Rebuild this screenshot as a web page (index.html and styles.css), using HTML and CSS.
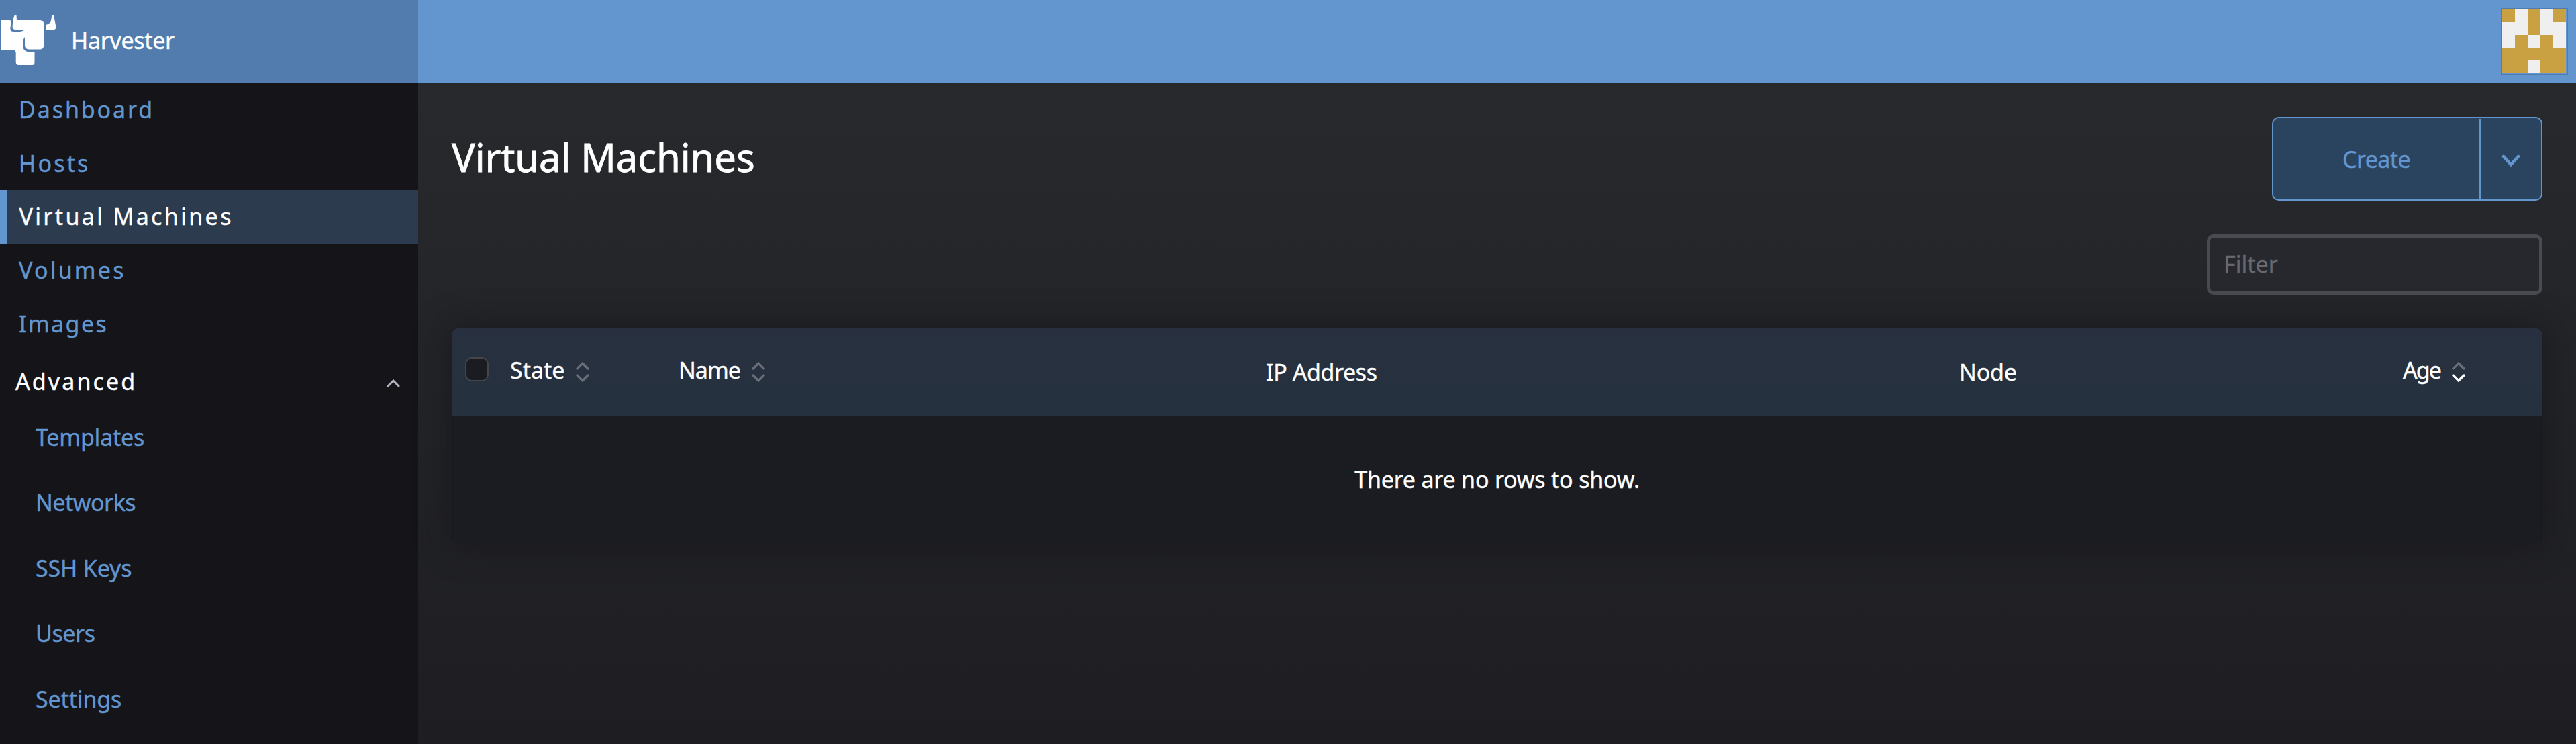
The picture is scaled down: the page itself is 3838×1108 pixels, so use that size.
FILE: index.html
```
<!DOCTYPE html>
<html lang="en">
<head>
<meta charset="utf-8">
<title>Harvester</title>
<link rel="stylesheet" href="styles.css">
</head>
<body>
<div class="app">
  <header class="topbar">
    <div class="brand">
      <svg class="logo" width="86" height="124" viewBox="0 0 86 124" fill="#fff">
        <path d="M1 30H14Q17 30 16.5 33L15.3 42Q15.3 47 20 47H30Q34 47 37 44H22Q18 43 18.7 38Q19.5 28 21.5 23Q23 20.5 24.5 23L25 30H60Q65.5 31 65.5 36V67Q65 73 60 73.5H43Q37 73 37 67V55Q34.5 58 34.3 62V68Q34.5 76 41 77H51.5V93Q51.5 97 48 97H27.5Q24 97 23.7 93V79Q23.7 75 20 74.3H1Z"/>
        <path d="M68 37Q76 36 76.5 28Q77 22 79 22Q80.5 22 81 28L83.5 40Q83.5 44 79 44.5H68Z"/>
      </svg>
      <span class="brand-name">Harvester</span>
    </div>
    <svg class="avatar" width="100" height="100" viewBox="0 0 100 100" shape-rendering="crispEdges">
      <rect x="1" y="1" width="98" height="98" fill="none" stroke="#527cae" stroke-width="2"/>
      <rect x="2" y="2" width="95" height="95" fill="#efefef"/>
      <path fill="#c9a143" d="M2 2h19v19H2zM40 2h19v38H40zM78 2h19v19H78zM21 40h19v19H21zM59 40h19v19H59zM2 59h95v38H59V78H40v19H2z"/>
    </svg>
  </header>
  <nav class="sidebar">
    <a class="item dashboard">Dashboard</a>
    <a class="item hosts">Hosts</a>
    <a class="item active">Virtual Machines</a>
    <a class="item volumes">Volumes</a>
    <a class="item images">Images</a>
    <div class="group">
      <span>Advanced</span>
      <svg width="20" height="12" viewBox="0 0 20 12" fill="none" stroke="#b6b6c2" stroke-width="3" stroke-linecap="round"><path d="M2 10L10 2l8 8"/></svg>
    </div>
    <a class="child templates">Templates</a>
    <a class="child networks">Networks</a>
    <a class="child">SSH Keys</a>
    <a class="child users">Users</a>
    <a class="child">Settings</a>
  </nav>
  <main class="main">
    <div class="title-row">
      <h1 class="title">Virtual Machines</h1>
      <div class="create">
        <button class="create-main">Create</button>
        <button class="create-toggle"><svg width="28" height="18" viewBox="0 0 28 18" fill="none" stroke="#6396cf" stroke-width="4.6" stroke-linecap="round"><path d="M3 3l11 12L25 3"/></svg></button>
      </div>
    </div>
    <input class="filter" placeholder="Filter">
    <section class="table">
      <div class="thead">
        <span class="check"></span>
        <span class="th">State <svg class="sort" width="20" height="30" viewBox="0 0 20 30"><path d="M2 10l8-8 8 8"/><path d="M2 20l8 8 8-8"/></svg></span>
        <span class="th name">Name <svg class="sort" width="20" height="30" viewBox="0 0 20 30"><path d="M2 10l8-8 8 8"/><path d="M2 20l8 8 8-8"/></svg></span>
        <span class="th plain ip">IP Address</span>
        <span class="th plain">Node</span>
        <span class="th age">Age <svg class="sort" width="20" height="30" viewBox="0 0 20 30"><path d="M2 10l8-8 8 8"/><path class="on" d="M2 20l8 8 8-8"/></svg></span>
      </div>
      <div class="empty">There are no rows to show.</div>
    </section>
  </main>
</div>
</body>
</html>
```
FILE: styles.css
```
* { box-sizing: border-box; }
body {
  margin: 0;
  font: 34px/80px "Noto Sans", sans-serif;
  -webkit-text-stroke: 0.4px currentColor;
  color: #fff;
  background: #1b1c21;
}
.app {
  display: grid;
  grid-template: 124px 984px / 623px 1fr;
  height: 1108px;
  overflow: hidden;
}
.topbar {
  grid-column: 1 / 3;
  display: flex;
  justify-content: space-between;
  align-items: center;
  padding-right: 12px;
  background: #6396cf;
}
.brand {
  display: flex;
  align-items: center;
  gap: 20px;
  width: 623px;
  height: 124px;
  background: #527cad;
}
.brand-name { line-height: 120px; height: 124px; letter-spacing: -0.3px; }
.avatar { display: block; }

.sidebar { background: #141419; color: #6396cf; }
.item {
  display: block;
  height: 79.5px;
  line-height: 78px;
  padding-left: 28px;
  letter-spacing: 3.2px;
}
.item.dashboard { letter-spacing: 2.9px; }
.item.active {
  height: 80px;
  line-height: 79px;
  padding-left: 18.5px;
  border-left: 10px solid #6396cf;
  background: #2c3b4d;
  color: #fff;
  letter-spacing: 3.35px;
}
.item.images { letter-spacing: 2.4px; }
.group {
  display: flex;
  justify-content: space-between;
  align-items: center;
  height: 80px;
  margin-top: 5px;
  padding: 2px 27px 0 23px;
  color: #fff;
  letter-spacing: 3.1px;
}
.group svg { margin-top: 5px; }
.child {
  display: block;
  height: 97.4px;
  line-height: 100px;
  padding-left: 53px;
  letter-spacing: -0.15px;
}
.child.templates { margin-top: -6px; letter-spacing: -0.2px; }
.child.networks { letter-spacing: -0.5px; }
.child.users { letter-spacing: -0.4px; }

.main {
  display: flex;
  flex-direction: column;
  padding: 50px 50px 0;
  background: linear-gradient(#27292d, #1e1e22);
}
.title-row { display: flex; justify-content: space-between; height: 125px; }
.title {
  margin: 0;
  font-size: 58px;
  font-weight: 400;
  line-height: 120px;
  letter-spacing: -0.1px;
  -webkit-text-stroke-width: 0.8px;
}
.create {
  display: flex;
  width: 403px;
  border: 2px solid #6396cf;
  border-radius: 10px;
  background: #2a435e;
}
.create button {
  display: flex;
  align-items: center;
  justify-content: center;
  padding: 0;
  border: 0;
  background: none;
  font: inherit;
  color: #6396cf;
}
.create-main { width: 307px; letter-spacing: -0.6px; }
.create .create-toggle {
  flex: 1;
  margin-top: 1px;
  border-left: 2px solid #6396cf;
}
.create-toggle svg { margin-top: 3px; }
.filter {
  align-self: flex-end;
  width: 500px;
  height: 90px;
  margin-top: 50px;
  padding: 0 0 2px 20px;
  border: 5px solid #4a4b50;
  border-radius: 10px;
  background: #27282d;
  font: inherit;
  color: #fff;
}
.filter::placeholder { color: #68696f; opacity: 1; }

.table {
  height: 320px;
  margin-top: 50px;
  border-radius: 10px;
  overflow: hidden;
  box-shadow: 0 0 50px rgba(20, 20, 25, .75);
}
.thead {
  display: grid;
  grid-template-columns: 87px 251px 875px 1033px 661px 1fr;
  height: 131px;
  background: linear-gradient(#28303f, #25313e);
}
.check {
  width: 35px;
  height: 36px;
  margin: 43px 0 0 20px;
  border: 2px solid #45464c;
  border-radius: 10px;
  background: #1b1c21;
}
.th { display: flex; line-height: 124px; height: 131px; }
.th.plain { line-height: 130px; letter-spacing: -0.2px; }
.th.ip { letter-spacing: -0.4px; }
.th.name { letter-spacing: -1px; }
.th.age { letter-spacing: -1.9px; }
.sort {
  margin: 50px 0 0 17px;
  fill: none;
  stroke: #686d78;
  stroke-width: 3.5;
  stroke-linecap: round;
}
.sort .on { stroke: #fff; }
.empty {
  height: 189px;
  border: solid #17181c;
  border-width: 0 2px;
  background: #1b1c21;
  text-align: center;
  line-height: 188px;
  letter-spacing: -0.2px;
}
```
